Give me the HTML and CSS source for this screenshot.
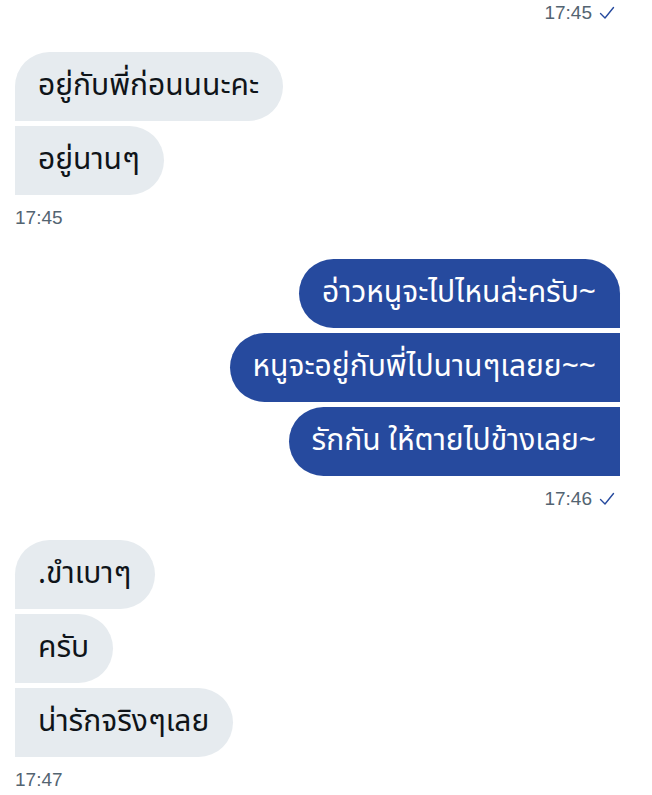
FILE: index.html
```html
<html>
    <head>
        <title>Messages</title>
        <meta name="viewport" content="width=device-width, initial-scale=1.0">
        <link rel="stylesheet" href="styles.css">
    </head>
    <body>
    <div class="chat">

        <div class="time time-sent">
            <span>17:45</span>
            <svg class="check" width="18" height="18" viewBox="0 0 18 18"><polyline points="2.5,9.5 7,14 15.5,3.5" /></svg>
        </div>

        <!-- them -->
        <div class="group group-in">
            <div class="bubble bubble-in">อยู่กับพี่ก่อนนนะคะ</div>
            <div class="bubble bubble-in">อยู่นานๆ</div>
        </div>
        <div class="time">17:45</div>

        <!-- me -->
        <div class="group group-out">
            <div class="bubble bubble-out">อ่าวหนูจะไปไหนล่ะครับ~</div>
            <div class="bubble bubble-out">หนูจะอยู่กับพี่ไปนานๆเลยย~~</div>
            <div class="bubble bubble-out">รักกัน ให้ตายไปข้างเลย~</div>
        </div>
        <div class="time time-sent">
            <span>17:46</span>
            <svg class="check" width="18" height="18" viewBox="0 0 18 18"><polyline points="2.5,9.5 7,14 15.5,3.5" /></svg>
        </div>

        <!-- them -->
        <div class="group group-in">
            <div class="bubble bubble-in">.ขำเบาๆ</div>
            <div class="bubble bubble-in">ครับ</div>
            <div class="bubble bubble-in">น่ารักจริงๆเลย</div>
        </div>
        <div class="time">17:47</div>

    </div>
    </body>
</html>
```

FILE: styles.css
```css
body{
    margin: 0;
    background-color: #fff;
    font-family: "Noto Sans Thai", "Noto Sans", "DejaVu Sans", sans-serif;
    color: #0f1419;
}

.chat{
    padding: 0 32px 0 15px;
}

.group{
    display: flex;
    flex-direction: column;
    gap: 5px;
    margin-top: 29px;
}

.group-in{
    align-items: flex-start;
}

.group-out{
    align-items: flex-end;
}

.bubble{
    height: 69px;
    box-sizing: border-box;
    display: flex;
    align-items: center;
    padding: 0 24px 2px 23px;
    font-size: 30px;
    white-space: nowrap;
}

.bubble-in{
    background-color: #e6ebef;
    border-radius: 0 35px 35px 0;
}

.bubble-in:first-child{
    border-top-left-radius: 35px;
}

.bubble-out{
    background-color: #264a9e;
    color: #fff;
    border-radius: 35px 0 0 35px;
}

.bubble-out:first-child{
    border-top-right-radius: 35px;
}

.time{
    font-family: "Liberation Sans", Arial, sans-serif;
    font-size: 19px;
    color: #536471;
    height: 24px;
    line-height: 24px;
    margin-top: 11px;
}

.time-sent{
    display: flex;
    justify-content: flex-end;
    align-items: center;
    gap: 6px;
    padding-right: 4px;
}

.chat > .time-sent:first-child{
    margin-top: 1px;
    margin-bottom: -2px;
}

.check{
    fill: none;
    stroke: #264a9e;
    stroke-width: 1.4;
    stroke-linecap: round;
    stroke-linejoin: round;
}
```
